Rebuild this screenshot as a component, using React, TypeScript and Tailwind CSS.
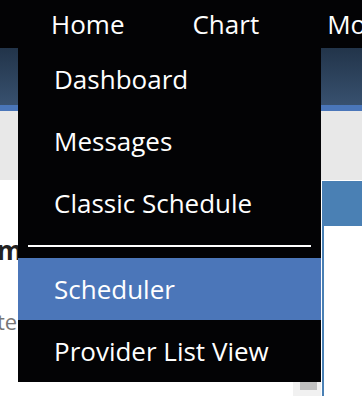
const menuItems = ["Dashboard", "Messages", "Classic Schedule"];
const lowerItems = ["Scheduler", "Provider List View"];

export default function App() {
  return (
    <div className="relative w-[362px] h-[396px] overflow-hidden bg-white font-['Open_Sans',sans-serif]">
      {/* top nav */}
      <nav className="h-[48px] bg-[#030305] flex items-center gap-[68px] pl-[51px] text-[26px] text-white whitespace-nowrap">
        <span>Home</span>
        <span>Chart</span>
        <span>More</span>
      </nav>

      {/* page header */}
      <div className="h-[57px] bg-gradient-to-b from-[#22344a] to-[#38516f]" />
      <div className="h-[6px] bg-[#4a76b9]" />
      <div className="h-[69px] bg-[#e8e8e8]" />

      {/* page body */}
      <div className="flex h-[216px]">
        <div className="w-[322px] flex">
          <div className="flex-1 pt-[53px] overflow-hidden">
            <h2 className="ml-[-3px] text-[26px] font-bold text-[#222] leading-[35px]">m</h2>
            <p className="ml-[-3px] mt-[38px] text-[22px] text-[#777] leading-[30px]">ter</p>
          </div>
          <div className="w-[28px] mr-[1px] bg-[#f1f1f1] flex pl-[7px] pr-[4px] pt-[150px]">
            <div className="w-full h-[60px] bg-[#c1c1c1]" />
          </div>
        </div>
        <div className="flex-1 pt-[1px]">
          <div className="h-full border-l-2 border-[#4a80b4]">
            <div className="h-[45px] bg-[#4a80b4] -ml-[2px]" />
          </div>
        </div>
      </div>

      {/* dropdown menu */}
      <div className="absolute left-[18px] top-[48px] w-[303px] bg-[#030305] text-white text-[26px]">
        {menuItems.map((item) => (
          <div key={item} className="h-[62px] flex items-center pl-[36px] whitespace-nowrap">
            {item}
          </div>
        ))}
        <div className="mx-[10px] my-[11px] h-[2px] bg-white" />
        {lowerItems.map((item) => (
          <div
            key={item}
            className={`h-[62px] flex items-center pl-[36px] whitespace-nowrap ${
              item === "Scheduler" ? "bg-[#4b76b9]" : ""
            }`}
          >
            {item}
          </div>
        ))}
      </div>
    </div>
  );
}
